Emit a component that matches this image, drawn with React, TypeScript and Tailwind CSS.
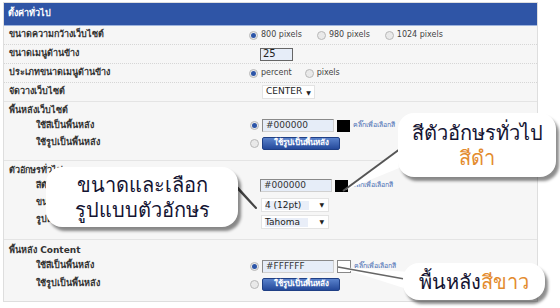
import React from "react";

const Radio = ({ checked }: { checked?: boolean }) => (
  <span className="inline-flex w-[9px] h-[9px] rounded-full border border-[#b8b8b8] bg-[#e9e9e9] items-center justify-center shrink-0">
    {checked && <span className="w-[5px] h-[5px] rounded-full bg-[#2c55a8]" />}
  </span>
);

const ColorInput = ({ value }: { value: string }) => (
  <span className="inline-flex items-center w-[72px] h-[13px] border border-[#8a8a8a] border-r-[#d0d0d0] border-b-[#d0d0d0] bg-[#e6edf8] text-[9px] leading-none pl-[3px] text-[#333]">
    {value}
  </span>
);

const PickLink = () => (
  <span className="text-[7px] text-[#4a6fb5] whitespace-nowrap">คลิ๊กเพื่อเลือกสี</span>
);

const ImgButton = () => (
  <span className="inline-flex items-center justify-center w-[78px] h-[13px] rounded-[2px] bg-gradient-to-b from-[#5a82cc] to-[#25499a] border border-[#1f3f85] text-white text-[8px] font-bold leading-none">
    ใช้รูปเป็นพื้นหลัง
  </span>
);

const Select = ({ value, w }: { value: string; w: string }) => (
  <span className={`inline-flex items-center justify-between h-[14px] ${w} bg-white border border-[#e3e3e3] pl-[3px] pr-[4px] text-[9px] text-[#222] leading-none`}>
    <span className="bg-[#e9eef8] pr-2">{value}</span>
    <span className="text-[6px]">▼</span>
  </span>
);

const Row = ({
  label,
  indent,
  dotted,
  h = "h-[19px]",
  children,
}: {
  label: string;
  indent?: boolean;
  dotted?: boolean;
  h?: string;
  children?: React.ReactNode;
}) => (
  <div className={`flex items-center ${h} ${dotted ? "border-b border-dotted border-[#d6d6d6]" : ""}`}>
    <div className={`w-[241px] shrink-0 text-[9px] font-bold text-[#333] ${indent ? "pl-[32px]" : "pl-[5px]"}`}>
      {label}
    </div>
    <div className="flex items-center gap-[3px]">{children}</div>
  </div>
);

const Heading = ({ label, h = "h-[16px]" }: { label: React.ReactNode; h?: string }) => (
  <div className={`${h} flex items-end pl-[5px] text-[9px] font-bold text-[#333]`}>{label}</div>
);

const Bubble = ({ className, children }: { className: string; children: React.ReactNode }) => (
  <div
    className={`absolute bg-white rounded-[16px] shadow-[3px_4px_3px_rgba(0,0,0,0.45)] flex flex-col items-center justify-center text-[20px] leading-[25px] text-[#141432] font-['Noto_Sans','Tahoma',sans-serif] ${className}`}
  >
    {children}
  </div>
);

export default function App() {
  return (
    <div className="relative w-[560px] h-[308px] bg-white font-['Tahoma','DejaVu_Sans',sans-serif] overflow-hidden">
      <div className="ml-[3px] mt-[2px] w-[535px] h-[300px] border border-[#dedede] bg-[#f6f6f6]">
        <div className="h-[23px] bg-[#2f55a6] border-b border-[#9db3dd] flex items-center pl-[4px] text-white text-[9px] font-bold">
          ตั้งค่าทั่วไป
        </div>

        <Row label="ขนาดความกว้างเว็บไซต์" dotted>
          <span className="flex items-center gap-[3px] text-[8px] text-[#444] ml-[4px]">
            <Radio checked />
            <span className="mr-[12px]">800 pixels</span>
            <Radio />
            <span className="mr-[12px]">980 pixels</span>
            <Radio />
            <span>1024 pixels</span>
          </span>
        </Row>
        <Row label="ขนาดเมนูด้านข้าง" dotted>
          <span className="ml-[15px] inline-flex items-center w-[33px] h-[13px] border border-[#666] bg-[#e6edf8] text-[10px] pl-[2px] leading-none text-[#222]">
            25
          </span>
        </Row>
        <Row label="ประเภทขนาดเมนูด้านข้าง" dotted>
          <span className="flex items-center gap-[3px] text-[8px] text-[#444] ml-[4px]">
            <Radio checked />
            <span className="mr-[10px]">percent</span>
            <Radio />
            <span>pixels</span>
          </span>
        </Row>
        <Row label="จัดวางเว็บไซต์" h="h-[18px]">
          <span className="ml-[17px] inline-flex items-center gap-[4px] h-[14px] px-[3px] bg-white border border-[#e3e3e3] text-[9px] text-[#222]">
            CENTER <span className="text-[6px]">▼</span>
          </span>
        </Row>

        <div className="border-t border-[#e4e4e4] pb-[8px]">
          <Heading label="พื้นหลังเว็บไซต์" h="h-[15px]" />
          <Row label="ใช้สีเป็นพื้นหลัง" indent h="h-[17px]">
            <span className="ml-[5px] flex items-center gap-[3px]">
              <Radio checked />
              <ColorInput value="#000000" />
              <span className="w-[13px] h-[12px] bg-black" />
              <PickLink />
            </span>
          </Row>
          <Row label="ใช้รูปเป็นพื้นหลัง" indent h="h-[18px]">
            <span className="ml-[5px] flex items-center gap-[3px]">
              <Radio />
              <ImgButton />
            </span>
          </Row>
        </div>

        <div className="border-t border-[#e4e4e4] pb-[11px]">
          <Heading label="ตัวอักษรทั่วไป" />
          <Row label="สีตัวอักษร" indent h="h-[17px]">
            <span className="ml-[15px] flex items-center gap-[3px]">
              <ColorInput value="#000000" />
              <span className="w-[13px] h-[12px] bg-black" />
              <PickLink />
            </span>
          </Row>
          <Row label="ขนาด" indent h="h-[17px]">
            <span className="ml-[16px]">
              <Select value="4 (12pt)" w="w-[68px]" />
            </span>
          </Row>
          <Row label="รูปแบบ" indent h="h-[17px]">
            <span className="ml-[16px]">
              <Select value="Tahoma" w="w-[68px]" />
            </span>
          </Row>
        </div>

        <div className="border-t border-[#e4e4e4]">
          <Heading
            h="h-[17px]"
            label={
              <span>
                พื้นหลัง <span className="font-['Tahoma','DejaVu_Sans',sans-serif]">Content</span>
              </span>
            }
          />
          <Row label="ใช้สีเป็นพื้นหลัง" indent h="h-[18px]">
            <span className="ml-[5px] flex items-center gap-[3px]">
              <Radio checked />
              <ColorInput value="#FFFFFF" />
              <span className="w-[14px] h-[13px] bg-white border border-[#888]" />
              <PickLink />
            </span>
          </Row>
          <Row label="ใช้รูปเป็นพื้นหลัง" indent h="h-[18px]">
            <span className="ml-[5px] flex items-center gap-[3px]">
              <Radio />
              <ImgButton />
            </span>
          </Row>
        </div>
      </div>

      {/* callout tails */}
      <svg className="absolute left-0 top-0" width="560" height="308" viewBox="0 0 560 308">
        <polygon points="222,172 238,188 256,208" fill="#fff" stroke="#444" strokeWidth="2" strokeLinejoin="round" />
        <polygon points="404,146 404,166 343,191" fill="#fff" />
        <line x1="404" y1="146" x2="343" y2="191" stroke="#555" strokeWidth="2" />
        <polygon points="338,267 410,272 410,290" fill="#fff" />
        <line x1="338" y1="267" x2="410" y2="280" stroke="#666" strokeWidth="1.5" />
      </svg>

      <Bubble className="left-[46px] top-[167px] w-[192px] h-[60px]">
        <span>ขนาดและเลือก</span>
        <span>รูปแบบตัวอักษร</span>
      </Bubble>
      <Bubble className="left-[398px] top-[113px] w-[158px] h-[64px]">
        <span>สีตัวอักษรทั่วไป</span>
        <span className="text-[#e38b2e]">สีดำ</span>
      </Bubble>
      <Bubble className="left-[403px] top-[263px] w-[142px] h-[37px]">
        <span>
          พื้นหลัง<span className="text-[#e38b2e]">สีขาว</span>
        </span>
      </Bubble>
    </div>
  );
}
